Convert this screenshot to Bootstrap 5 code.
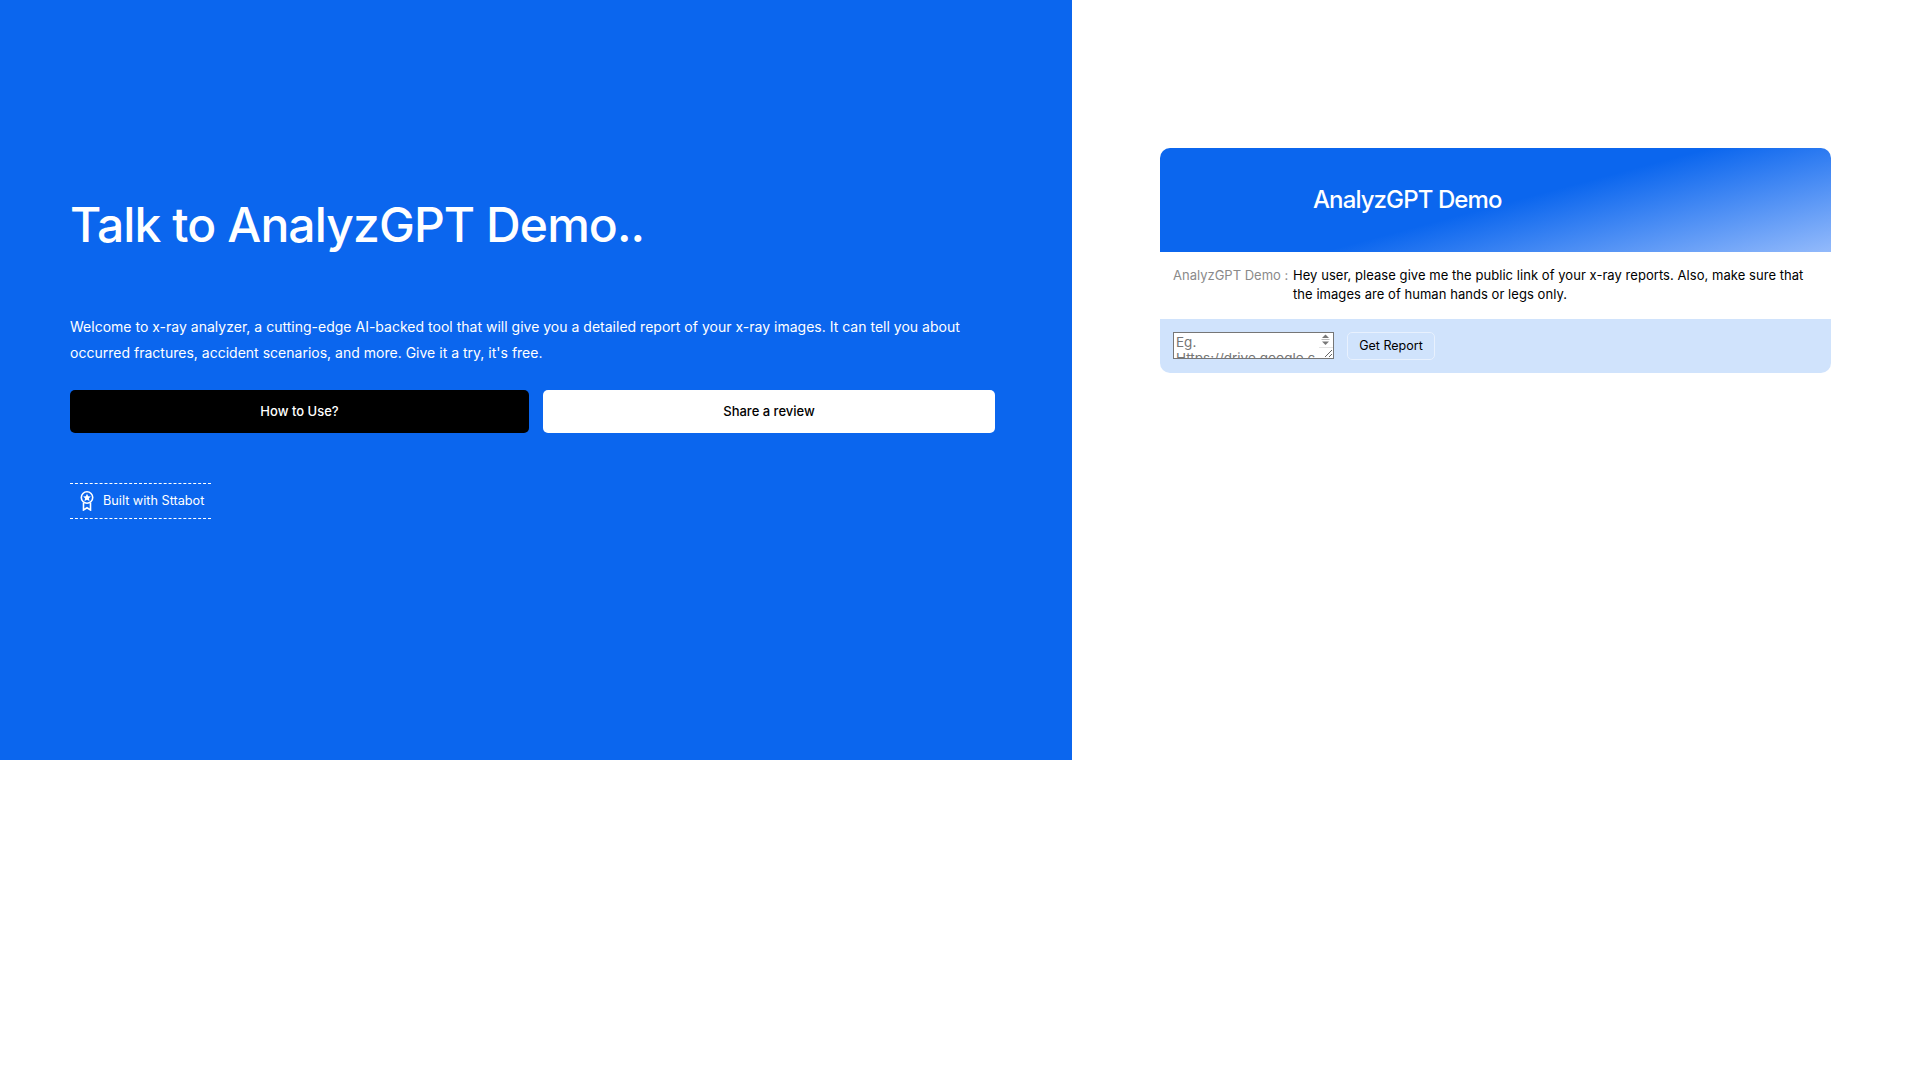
<!DOCTYPE html>
<html lang="en">
<head>
<meta charset="utf-8">
<title>AnalyzGPT Demo</title>
<link href="https://cdn.jsdelivr.net/npm/bootstrap@5.3.0/dist/css/bootstrap.min.css" rel="stylesheet">
<style>
body{font-family:Inter,"Liberation Sans",sans-serif;background:#fff;color:#000;min-height:1089px}
.hero-pane{width:1072px;height:760px;background:#0b66ee;color:#fff;padding:191px 77px 0 70px;flex:none}
.hero-title{font-size:48px;font-weight:500;line-height:68px;margin:0 0 55px;letter-spacing:-.9px}
.hero-text{font-size:14px;line-height:26px;margin:0 0 24px;font-weight:400;letter-spacing:.01px}
.hero-actions{gap:14px}
.hero-btn{height:43px;font-size:13px;font-weight:500;border-radius:5px;border:0;padding:0;display:flex;align-items:center;justify-content:center}
.hero-btn.first{width:459px;background:#000;color:#fff}
.hero-btn.second{width:452px;background:#fff;color:#000}
.built{width:141px;height:36px;margin-top:50px;border-top:1px dashed #fff;border-bottom:1px dashed #fff;font-size:12.7px;color:#fff;padding-left:10px;gap:9px}
.chat-pane{padding:148px 89px 0 88px;flex:1 1 auto}
.chat-card{border-radius:10px;overflow:hidden;border:0;background:#fff}
.chat-head{height:104px;background:linear-gradient(165deg,#0b66ee 52%,#93bafb 100%);color:#fff;font-size:24px;font-weight:500;padding-left:153px;letter-spacing:-.9px}
.chat-msg{height:67px;padding:14px 27px 0 13px;font-size:13px;line-height:19px;letter-spacing:.05px}
.chat-who{color:#8a8a8a;width:120px;flex:none;white-space:nowrap;letter-spacing:0}
.chat-foot{height:54px;background:#d0e3fc;padding:13px;gap:13px;align-items:flex-start}
.input-wrap{width:161px;height:27px;line-height:0}
.chat-input{width:161px;height:27px;border:1px solid #767676;border-radius:0;font-size:13.5px;line-height:16px;padding:1px 17px 1px 2px;font-family:inherit;font-weight:400;overflow:hidden;background:#fff;outline:0;display:block;resize:both}
.chat-input::placeholder{color:#757575;opacity:1}
.spin-arrows{position:absolute;top:1px;right:1px;pointer-events:none}
.chat-send{width:88px;height:28px;font-size:12.5px;border:1px solid #e8f1fe;background:#d0e3fc;color:#000;border-radius:5px;padding:0;font-weight:400}
</style>
</head>
<body>
<div class="d-flex">
  <section class="hero-pane">
    <h1 class="hero-title">Talk to AnalyzGPT Demo..</h1>
    <p class="hero-text">Welcome to x-ray analyzer, a cutting-edge AI-backed tool that will give you a detailed report of your x-ray images. It can tell you about occurred fractures, accident scenarios, and more. Give it a try, it's free.</p>
    <div class="d-flex hero-actions">
      <a class="btn hero-btn first" href="#">How to Use?</a>
      <a class="btn hero-btn second" href="#">Share a review</a>
    </div>
    <a href="#" class="built d-flex align-items-center text-decoration-none">
      <svg width="14" height="20" viewBox="0 0 14 20" fill="none" stroke="#fff" stroke-width="1.6" aria-hidden="true"><circle cx="7" cy="6.500" r="5.700"/><path d="M7 2.700l1.200 2.500 2.700.3-2 1.800.6 2.700L7 8.700 4.500 10l.6-2.700-2-1.800 2.700-.3z" fill="#fff" stroke="none"/><path d="M3.500 11.500V19L7 16.800 10.500 19v-7.500"/></svg>
      <span>Built with Sttabot</span>
    </a>
  </section>
  <section class="chat-pane">
    <div class="card chat-card">
      <div class="chat-head d-flex align-items-center">AnalyzGPT Demo</div>
      <div class="chat-msg d-flex">
        <span class="chat-who">AnalyzGPT Demo :</span>
        <span>Hey user, please give me the public link of your x-ray reports. Also, make sure that the images are of human hands or legs only.</span>
      </div>
      <div class="chat-foot d-flex">
        <div class="input-wrap position-relative">
          <textarea class="chat-input" placeholder="Eg. Https://drive.google.com/your-xray-report"></textarea>
          <svg class="spin-arrows" width="15" height="16" viewBox="0 0 15 16" aria-hidden="true"><path d="M7.500 1.500l3.500 3.500H4z" fill="#777"/><path d="M3.500 6.500h8" stroke="#bbb"/><path d="M7.500 12l3.500-3.500H4z" fill="#777"/><path d="M1 14.500h14" stroke="#e4e4e4"/></svg>
        </div>
        <button class="btn chat-send" type="button">Get Report</button>
      </div>
    </div>
  </section>
</div>
</body>
</html>
